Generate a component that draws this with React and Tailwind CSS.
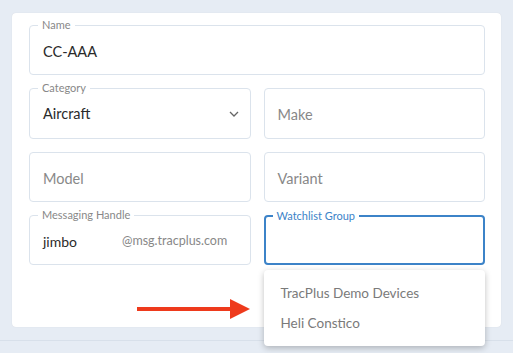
// App.jsx
const font = { fontFamily: "Lato, 'Open Sans', sans-serif" };

function Field({ label, children, focused = false, className = "" }) {
  return (
    <div
      className={`relative h-[50px] rounded-[4px] bg-white flex items-center px-[13px] ${
        focused ? "border-2 border-[#3c83c8]" : "border border-[#dbe3ec]"
      } ${className}`}
    >
      {label && (
        <span
          className={`absolute -top-[8px] bg-white px-[4px] text-[11px] leading-[14px] ${
            focused ? "left-[7px] text-[#3c83c8]" : "left-[8px] text-[#888]"
          }`}
        >
          {label}
        </span>
      )}
      {children}
    </div>
  );
}

export default function App() {
  return (
    <div
      style={font}
      className="w-[513px] h-[353px] bg-[#e6ecf4] relative overflow-hidden"
    >
      <div className="pt-[13px] px-[12px]">
        {/* Card */}
        <div className="h-[314px] bg-white rounded-[4px] shadow-[0_0_1px_rgba(0,0,0,0.12)] pt-[12px] pl-[17px] pr-[16px]">
          <div className="flex flex-col gap-[13px]">
            <Field label="Name">
              <span className="text-[14.5px] text-[#2a2a2a] pt-[3px]">CC-AAA</span>
            </Field>

            <div className="grid grid-cols-2 gap-[13px]">
              <Field label="Category" className="justify-between h-[51px]">
                <span className="text-[14.5px] text-[#2a2a2a]">Aircraft</span>
                <svg width="10" height="6" viewBox="0 0 10 6" className="mr-[-2px]">
                  <path d="M1 1l4 4 4-4" fill="none" stroke="#666" strokeWidth="1.3" />
                </svg>
              </Field>
              <Field className="h-[51px]">
                <span className="text-[14.5px] text-[#888] pt-[3px]">Make</span>
              </Field>
            </div>

            <div className="grid grid-cols-2 gap-[13px]">
              <Field>
                <span className="text-[14.5px] text-[#888] pt-[3px]">Model</span>
              </Field>
              <Field>
                <span className="text-[14.5px] text-[#888] pt-[3px]">Variant</span>
              </Field>
            </div>

            <div className="grid grid-cols-2 gap-[13px]">
              <Field label="Messaging Handle">
                <span className="text-[14px] text-[#2a2a2a] w-[79px] pt-[2px]">jimbo</span>
                <span className="text-[12.5px] text-[#888] pt-[2px]">@msg.tracplus.com</span>
              </Field>
              <div className="relative">
                <Field label="Watchlist Group" focused />
                {/* Dropdown menu */}
                <div className="absolute left-0 right-0 top-[55px] bg-white rounded-[4px] shadow-[0_2px_6px_rgba(0,0,0,0.25)] py-[8px] z-10">
                  <div className="h-[30px] flex items-center px-[17px] text-[13.5px] text-[#7a7a7a]">
                    TracPlus Demo Devices
                  </div>
                  <div className="h-[30px] flex items-center px-[17px] text-[13.5px] text-[#7a7a7a]">
                    Heli Constico
                  </div>
                </div>
              </div>
            </div>
          </div>
        </div>
      </div>

      <div className="mt-[13px] h-px bg-[#d8e0ea]" />

      {/* Annotation arrow */}
      <svg
        className="absolute left-[137px] top-[298px]"
        width="114"
        height="22"
        viewBox="0 0 114 22"
      >
        <rect x="0" y="9" width="96" height="4" fill="#ee3a1c" />
        <polygon points="93,1 113,11 93,21" fill="#ee3a1c" />
      </svg>
    </div>
  );
}
